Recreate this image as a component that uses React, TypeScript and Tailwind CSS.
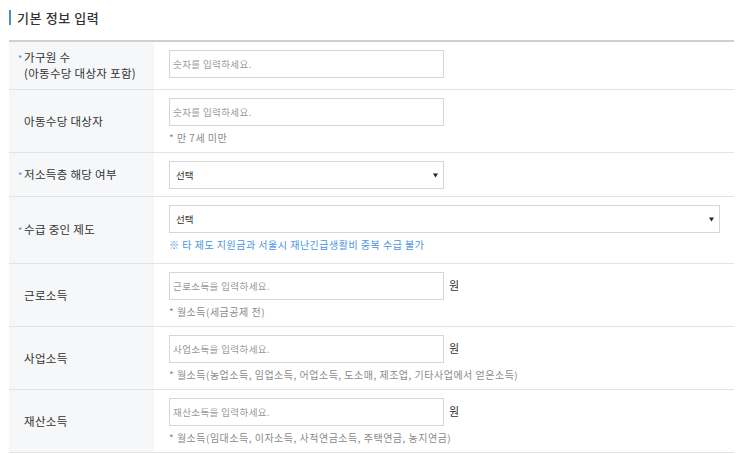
import React from "react"

const font = { fontFamily: '"Noto Sans CJK KR", "Noto Sans", sans-serif' }

function Arrow() {
    return (
        <svg width="5" height="5" viewBox="0 0 5 5" className="shrink-0">
            <polygon points="0,0.5 5,0.5 2.5,4.5" fill="#222" />
        </svg>
    )
}

function Row({ label, star, sub, pb = "pb-[7px]", children }: { label: string; star?: boolean; sub?: string; pb?: string; children: React.ReactNode }) {
    return (
        <div className="flex border-b border-[#e3e3e3]">
            <div className={"w-[145px] shrink-0 bg-[#f6f7f9] flex flex-col justify-center py-[8px] text-[11.5px] leading-[15px] text-[#333] tracking-[0.3px] " + (star ? "pl-[9px]" : "pl-[15px]")}>
                <div>{star && <span className="text-[#4a8fd8] text-[9px] inline-block w-[6px]">*</span>}{label}</div>
                {sub && <div className="pl-[6px]">{sub}</div>}
            </div>
            <div className={"flex-1 pl-[15px] pt-[8px] " + pb}>{children}</div>
        </div>
    )
}

function Input({ ph, won }: { ph: string; won?: boolean }) {
    return (
        <div className="flex items-start">
            <div className="w-[275px] h-[28px] border border-[#d6d6d6] bg-white flex items-center px-[3px] text-[9.5px] text-[#999] tracking-[0.4px]">{ph}</div>
            {won && <span className="ml-[5px] mt-[6px] text-[11px] text-[#333] leading-[14px]">원</span>}
        </div>
    )
}

function Select({ wide }: { wide?: boolean }) {
    return (
        <div className={(wide ? "w-[551px]" : "w-[275px]") + " h-[28px] border border-[#d6d6d6] bg-white flex items-center justify-between pl-[6px] pr-[5px] text-[9.5px] text-[#333]"}>
            <span>선택</span>
            <Arrow />
        </div>
    )
}

function Note({ text, blue }: { text: string; blue?: boolean }) {
    return (
        <div className={"mt-[5px] leading-[14px] text-[10px] tracking-[0.5px] " + (blue ? "text-[#4a93e0]" : "text-[#8a8a8a]")}>{text}</div>
    )
}

export default function App() {
    return (
        <div className="w-[743px] h-[454px] bg-white overflow-hidden" style={font}>
            <div className="flex items-center h-[15px] mt-[10px] ml-[9px]">
                <div className="w-[2px] h-[15px] bg-[#4d8fbd]" />
                <div className="ml-[6px] text-[13px] font-medium text-[#333] tracking-[0.6px] leading-none">기본 정보 입력</div>
            </div>
            <div className="mx-[9px] mt-[15px] border-t-2 border-[#cfcfcf]">
                <Row label="가구원 수" star sub="(아동수당 대상자 포함)">
                    <Input ph="숫자를 입력하세요." />
                </Row>
                <Row label="아동수당 대상자">
                    <Input ph="숫자를 입력하세요." />
                    <Note text="* 만 7세 미만" />
                </Row>
                <Row label="저소득층 해당 여부" star>
                    <Select />
                </Row>
                <Row label="수급 중인 제도" star pb="pb-[11px]">
                    <Select wide />
                    <Note text="※ 타 제도 지원금과 서울시 재난긴급생활비 중복 수급 불가" blue />
                </Row>
                <Row label="근로소득">
                    <Input ph="근로소득을 입력하세요." won />
                    <Note text="* 월소득(세금공제 전)" />
                </Row>
                <Row label="사업소득">
                    <Input ph="사업소득을 입력하세요." won />
                    <Note text="* 월소득(농업소득, 임업소득, 어업소득, 도소매, 제조업, 기타사업에서 얻은소득)" />
                </Row>
                <Row label="재산소득">
                    <Input ph="재산소득을 입력하세요." won />
                    <Note text="* 월소득(임대소득, 이자소득, 사적연금소득, 주택연금, 농지연금)" />
                </Row>
            </div>
        </div>
    )
}
